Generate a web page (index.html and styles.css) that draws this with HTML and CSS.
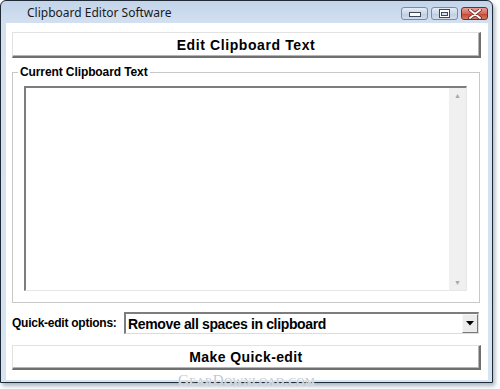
FILE: index.html
```html
<!DOCTYPE html>
<html lang="en">
<head>
  <meta charset="UTF-8" />
  <title>Clipboard Editor Software</title>
  <link rel="stylesheet" href="styles.css">
</head>
<body>
  <div class="window">
    <div class="titlebar">
      <span class="title">Clipboard Editor Software</span>
      <div class="caption-btns">
        <span class="cbtn min"><svg width="12" height="6" viewBox="0 0 12 6"><rect x="0.5" y="0.5" width="11" height="4" fill="#fff" stroke="#3b4a5c"/></svg></span>
        <span class="cbtn max"><svg width="11" height="9" viewBox="0 0 11 9"><rect x="0.5" y="0.5" width="10" height="8" fill="#fff" stroke="#3b4a5c"/><rect x="2.5" y="3.5" width="6" height="3" fill="#d6e0ec" stroke="#3b4a5c"/></svg></span>
        <span class="cbtn close"><svg width="14" height="10" viewBox="0 0 14 10"><path d="M2 1 L12 9 M12 1 L2 9" stroke="#5a1d18" stroke-width="3.4" stroke-linecap="round"/><path d="M2 1 L12 9 M12 1 L2 9" stroke="#fff" stroke-width="2" stroke-linecap="round"/></svg></span>
      </div>
    </div>

    <div class="client">
      <div class="btn">Edit Clipboard Text</div>

      <fieldset class="group">
        <legend>Current Clipboard Text</legend>
        <div class="textbox">
          <div class="text-area"></div>
          <div class="vscroll">
            <span class="arrow">&#9650;</span>
            <span class="arrow">&#9660;</span>
          </div>
        </div>
      </fieldset>

      <div class="quick-row">
        <span class="quick-label">Quick-edit options:</span>
        <div class="combo">
          <span class="combo-text">Remove all spaces in clipboard</span>
          <span class="combo-btn"><svg width="8" height="5" viewBox="0 0 8 5"><path d="M0 0 H8 L4 4.5 Z" fill="#000"/></svg></span>
        </div>
      </div>

      <div class="btn btn-quick">Make Quick-edit</div>
    </div>
  </div>
  <div class="watermark">GearDownload.com</div>
</body>
</html>
```

FILE: styles.css
```css
* { box-sizing: border-box; }
body {
  margin: 0;
  background: #fff;
  width: 500px; height: 389px;
  overflow: hidden;
  position: relative;
  font-family: 'Liberation Sans', Arial, sans-serif;
}

.window {
  width: 493px; height: 383px;
  border: 1px solid #1f2a36;
  border-radius: 6px 6px 0 0;
  background: linear-gradient(#c3d5ea 0, #d2e0f0 22px, #d6e3f1 100%);
  box-shadow: 2px 3px 4px rgba(60,90,120,.45);
  display: flex; flex-direction: column;
}

.titlebar {
  height: 22px;
  display: flex; align-items: center; justify-content: space-between;
  padding: 0 4px 0 26px;
}
.title {
  font-family: 'Noto Sans', 'Open Sans', sans-serif;
  font-size: 12px;
  color: #1a1a1a;
  margin-top: 1px;
}
.caption-btns { display: flex; gap: 3px; align-self: flex-start; margin-top: 6px; }
.cbtn {
  display: flex; align-items: center; justify-content: center;
  height: 13px;
  border: 1px solid #7a8ca3;
  border-radius: 3px;
  background: linear-gradient(#e4ecf6, #cbd8e8 50%, #bccbe0 51%, #d2deee);
}
.cbtn.min, .cbtn.max { width: 27px; }
.cbtn.min svg { margin-top: 3px; }
.cbtn.close {
  width: 27px;
  border-color: #7a2a22;
  background: linear-gradient(#e8a093, #d2685a 50%, #c2402f 51%, #d77a62);
}

.client {
  flex: 1;
  margin: 0 4px 2px 5px;
  background: #fff;
  padding: 9px 6px 0 6px;
  display: flex; flex-direction: column;
}

.btn {
  height: 26px;
  width: 469px;
  background: #fff;
  border-top: 1px solid #e2e2e2;
  border-left: 1px solid #e2e2e2;
  border-right: 2px solid #6f6f6f;
  border-bottom: 2px solid #6f6f6f;
  box-shadow: inset -1px -1px 0 #b5b5b5;
  display: flex; align-items: center; justify-content: center;
  font-size: 14px; font-weight: bold; color: #000;
  letter-spacing: .6px;
}
.btn-quick { height: 25px; margin-top: 11px; letter-spacing: .4px; }

.group {
  margin: 7px 0 0 0;
  width: 468px;
  border: 1px solid #c8c8c8;
  padding: 7px 11px 11px 11px;
}
.group legend {
  font-size: 12px; font-weight: bold;
  line-height: 14px;
  padding: 0 2px;
  margin-left: -6px;
  letter-spacing: -.1px;
}

.textbox {
  display: flex;
  width: 443px; height: 205px;
  border-top: 2px solid #7d7d7d;
  border-left: 2px solid #7d7d7d;
  border-right: 1px solid #e6e6e6;
  border-bottom: 1px solid #e6e6e6;
}
.text-area { flex: 1; background: #fff; }
.vscroll {
  width: 17px;
  background: #f0f0f0;
  display: flex; flex-direction: column; justify-content: space-between; align-items: center;
  padding: 4px 0 3px;
}
.arrow { font-size: 7px; color: #a8a8a8; line-height: 8px; }

.quick-row {
  display: flex; align-items: center;
  margin-top: 9px;
}
.quick-label {
  font-size: 12px; font-weight: bold;
  width: 112px;
  letter-spacing: -.25px;
}
.combo {
  width: 355px; height: 22px;
  display: flex; align-items: center; justify-content: space-between;
  border-top: 2px solid #7d7d7d;
  border-left: 2px solid #7d7d7d;
  border-right: 1px solid #dcdcdc;
  border-bottom: 1px solid #dcdcdc;
  padding-left: 2px;
}
.combo-text { font-size: 14px; font-weight: bold; letter-spacing: -.35px; }
.combo-btn {
  width: 16px; height: 19px;
  background: #ececec;
  border-top: 1px solid #f8f8f8;
  border-left: 1px solid #f8f8f8;
  border-right: 1px solid #7a7a7a;
  border-bottom: 1px solid #7a7a7a;
  display: flex; align-items: center; justify-content: center;
}

.watermark {
  position: absolute;
  left: 178px; top: 372px;
  font-family: 'Liberation Serif', serif;
  font-variant: small-caps;
  font-size: 15px;
  letter-spacing: .5px;
  color: #c2c9cd;
  text-shadow: 0 0 1px #fff, 0 0 1px #fff;
}
```
